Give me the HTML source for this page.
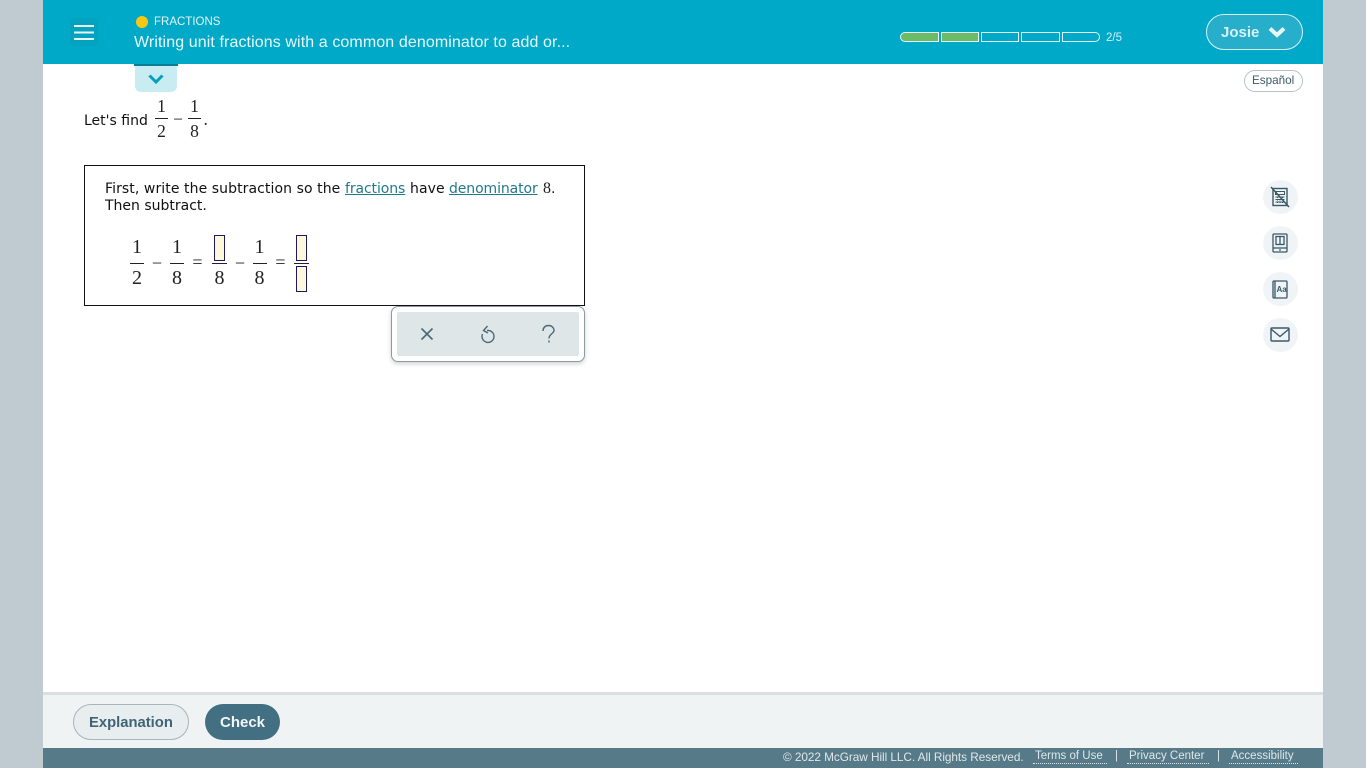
<!DOCTYPE html>
<html lang="en"><head><meta charset="utf-8"><title>Fractions</title>
<style>
html,body{margin:0;padding:0;width:1366px;height:768px;overflow:hidden;background:#bfcbd1}
#app{position:absolute;left:43px;top:0;width:1280px;height:768px;background:#fff}
.a{position:absolute;white-space:nowrap;line-height:1}
body{font-family:"Liberation Sans",sans-serif}
.dj{font-family:"DejaVu Sans",sans-serif;font-size:14px;color:#111;line-height:17px}
.m{font-family:"Liberation Serif",serif;color:#222;text-align:center;line-height:1}
.bar{position:absolute;background:#222;height:1px}
.box{position:absolute;box-sizing:border-box;border:1.5px solid #1d1a5e;background:#fdf8dc;width:11px;height:26px}
.circ{position:absolute;left:1263px;width:35px;height:34px;border-radius:50%;background:#f1f4f6}
svg{position:absolute;overflow:visible}
a{color:#1f7a8c;text-decoration:underline}
.seg{position:absolute;top:32px;height:10px;box-sizing:border-box;border:1px solid #e6f6f9}
</style></head><body>
<div id="app"></div>
<div class="a" style="left:43px;top:0;width:1280px;height:64px;background:#00a9c7"></div>

<!-- hamburger -->
<div class="a" style="left:70px;top:18px;width:28px;height:28px;border-radius:4px;background:#03a3c0"></div>
<svg style="left:74px;top:25px" width="20" height="15" viewBox="0 0 20 15"><path d="M0 1h20M0 7.500h20M0 14h20" stroke="#e8f6f9" stroke-width="2"/></svg>
<div class="a" style="left:136px;top:16px;width:12px;height:12px;border-radius:50%;background:#f7c713"></div>
<div class="a" style="left:154px;top:17px;font-size:11.500px;color:#e3f5f8">FRACTIONS</div>
<div class="a" style="left:134px;top:35px;font-size:16px;color:#e8f7fa;letter-spacing:.1px">Writing unit fractions with a common denominator to add or...</div>

<!-- drop tab -->
<div class="a" style="left:135px;top:64px;width:42px;height:28px;background:#c9ecf2;border-radius:0 0 6px 6px"></div>
<div class="a" style="left:134px;top:64px;width:44px;height:2px;background:#087f96"></div>
<svg style="left:148px;top:74px" width="16" height="10" viewBox="0 0 16 10"><path d="M1.500 1.500L8 8l6.500-6.500" fill="none" stroke="#05a0bb" stroke-width="3"/></svg>

<!-- progress -->
<div class="seg" style="left:900px;width:39px;background:#6cbb66;border-radius:5px 0 0 5px"></div>
<div class="seg" style="left:941px;width:38px;background:#6cbb66"></div>
<div class="seg" style="left:981px;width:38px"></div>
<div class="seg" style="left:1021px;width:39px"></div>
<div class="seg" style="left:1062px;width:38px;border-radius:0 5px 5px 0"></div>
<div class="a" style="left:1106px;top:33px;font-size:11.500px;color:#d5f0f5">2/5</div>

<!-- user -->
<div class="a" style="left:1206px;top:14px;width:97px;height:36px;box-sizing:border-box;border:1px solid #d6f1f6;border-radius:18px;background:#26aecb"></div>
<div class="a" style="left:1221px;top:25px;font-size:15px;font-weight:700;color:#d8f1f6">Josie</div>
<svg style="left:1268px;top:26px" width="18" height="12" viewBox="0 0 18 12"><path d="M2 2.500L9 9 16 2.500" fill="none" stroke="#eaf8fa" stroke-width="4"/></svg>

<!-- espanol -->
<div class="a" style="left:1244px;top:70px;width:59px;height:22px;box-sizing:border-box;border:1px solid #b7c2c7;border-radius:11px"></div>
<div class="a" style="left:1252px;top:74.500px;font-size:11.700px;color:#3c5a68">Español</div>

<!-- let's find -->
<div class="a dj" style="left:84px;top:113px;">Let's find</div>
<div class="a m" style="left:155px;top:98px;width:13px;font-size:17.500px">1</div>
<div class="bar" style="left:155px;top:118px;width:13px"></div>
<div class="a m" style="left:155px;top:123px;width:13px;font-size:17.500px">2</div>
<div class="a m" style="left:172px;top:111px;width:12px;font-size:17.500px">&minus;</div>
<div class="a m" style="left:188px;top:98px;width:13px;font-size:17.500px">1</div>
<div class="bar" style="left:188px;top:118px;width:13px"></div>
<div class="a m" style="left:188px;top:123px;width:13px;font-size:17.500px">8</div>
<div class="a m" style="left:203.500px;top:111px;font-size:17.500px">.</div>

<!-- question box -->
<div class="a" style="left:84px;top:165px;width:501px;height:141px;box-sizing:border-box;border:1px solid #111"></div>
<div class="a dj" style="left:105px;top:181px;letter-spacing:.08px">First, write the subtraction so the</div>
<div class="a dj" style="left:345px;top:181px;letter-spacing:-.1px"><a>fractions</a></div>
<div class="a dj" style="left:410px;top:181px;letter-spacing:.08px">have</div>
<div class="a dj" style="left:449px;top:181px;letter-spacing:-.1px"><a>denominator</a></div>
<div class="a m" style="left:543px;top:181px;font-size:16px">8</div>
<div class="a dj" style="left:551px;top:181px">.</div>
<div class="a dj" style="left:105px;top:198px">Then subtract.</div>

<!-- equation -->
<div class="a m" style="left:130px;top:237px;width:14px;font-size:20px">1</div>
<div class="bar" style="left:130px;top:263px;width:14px"></div>
<div class="a m" style="left:130px;top:268px;width:14px;font-size:20px">2</div>
<div class="a m" style="left:150px;top:254px;width:14px;font-size:18px">&minus;</div>
<div class="a m" style="left:170px;top:237px;width:14px;font-size:20px">1</div>
<div class="bar" style="left:170px;top:263px;width:14px"></div>
<div class="a m" style="left:170px;top:268px;width:14px;font-size:20px">8</div>
<div class="a m" style="left:190px;top:253px;width:15px;font-size:18px">=</div>
<div class="box" style="left:214px;top:235px"></div>
<div class="bar" style="left:212px;top:263px;width:15px"></div>
<div class="a m" style="left:212px;top:268px;width:15px;font-size:20px">8</div>
<div class="a m" style="left:233px;top:254px;width:14px;font-size:18px">&minus;</div>
<div class="a m" style="left:252.500px;top:237px;width:14px;font-size:20px">1</div>
<div class="bar" style="left:253px;top:263px;width:14px"></div>
<div class="a m" style="left:252.500px;top:268px;width:14px;font-size:20px">8</div>
<div class="a m" style="left:273px;top:253px;width:15px;font-size:18px">=</div>
<div class="box" style="left:296px;top:235px"></div>
<div class="bar" style="left:294px;top:263px;width:15px"></div>
<div class="box" style="left:296px;top:266px"></div>

<!-- tool palette -->
<div class="a" style="left:391px;top:306px;width:194px;height:56px;box-sizing:border-box;border:1px solid #8d9a9f;border-radius:7px;background:#fff;box-shadow:0 2px 5px rgba(0,0,0,.18)"></div>
<div class="a" style="left:397px;top:312px;width:182px;height:44px;background:#dfe6e8;border-radius:2px"></div>
<svg style="left:421px;top:328px" width="12" height="12" viewBox="0 0 12 12"><path d="M.5 .5l11 11M11.500 .5l-11 11" stroke="#476a78" stroke-width="1.600" fill="none"/></svg>
<svg style="left:481px;top:325px" width="14" height="18" viewBox="0 0 14 18"><path d="M6.500 1L2.500 5.500 7 8M6 5.500A6 6 0 1 1 1.500 9" stroke="#476a78" stroke-width="1.400" fill="none"/></svg>
<svg style="left:542px;top:325px" width="13" height="18" viewBox="0 0 13 18"><path d="M1 6C1 2.500 3.500 .5 6.500 .5 9.500 .5 12 2.500 12 5.500 12 8.500 7 9 7 13.500M7 15.500v2" stroke="#476a78" stroke-width="1.400" fill="none"/></svg>

<!-- side tools -->
<div class="circ" style="top:180px"></div>
<svg style="left:1271px;top:187px" width="18" height="20" viewBox="0 0 18 20" fill="none" stroke="#38596a"><rect x="2" y="1.500" width="14" height="17" stroke-width="1.400"/><path d="M4.500 4.500h9v3h-9z" stroke-width="1"/><path d="M4.500 10h9M4.500 12.500h9M4.500 15h9M6.500 9.500v6.500M9 9.500v6.500M11.500 9.500v6.500" stroke-width="1" stroke-dasharray="1.500 1"/><path d="M0 0l18 20" stroke-width="1.500"/></svg>
<div class="circ" style="top:226px"></div>
<svg style="left:1272px;top:233px" width="16" height="20" viewBox="0 0 16 20" fill="none" stroke="#38596a" stroke-width="1.300"><rect x="1" y="1" width="14" height="18" rx="1"/><path d="M1 15h14"/><rect x="4" y="3.500" width="8" height="8"/><path d="M8 3.500v8"/><path d="M7.200 17h1.600" stroke-width="1.500"/></svg>
<div class="circ" style="top:272px"></div>
<svg style="left:1272px;top:280px" width="16" height="19" viewBox="0 0 16 19" fill="none" stroke="#38596a" stroke-width="1.300"><rect x="1" y="1" width="14" height="17" rx="1"/><path d="M3 1v17"/><text x="4.500" y="12" font-family="Liberation Sans" font-size="8" font-weight="700" fill="#38596a" stroke="none">Aa</text></svg>
<div class="circ" style="top:318px"></div>
<svg style="left:1270px;top:327px" width="20" height="15" viewBox="0 0 20 15" fill="none" stroke="#38596a" stroke-width="1.400"><rect x="1" y="1" width="18" height="13" rx="1"/><path d="M1 2l9 7.500L19 2"/></svg>

<!-- bottom bar -->
<div class="a" style="left:43px;top:692px;width:1280px;height:56px;background:#eff3f4"></div>
<div class="a" style="left:43px;top:692px;width:1280px;height:3px;background:#d8e0e2"></div>
<div class="a" style="left:73px;top:704px;width:116px;height:36px;box-sizing:border-box;border:1px solid #a8b5ba;border-radius:18px;background:#e8edef"></div>
<div class="a" style="left:89px;top:716px;font-size:14.800px;font-weight:700;color:#3f6475">Explanation</div>
<div class="a" style="left:205px;top:704px;width:75px;height:36px;border-radius:18px;background:#436f82"></div>
<div class="a" style="left:220px;top:715px;font-size:15px;font-weight:700;color:#f2f6f7">Check</div>

<!-- footer -->
<div class="a" style="left:43px;top:748px;width:1280px;height:20px;background:#567a88"></div>
<div class="a" style="left:783px;top:751.500px;font-size:11.800px;color:#dfe8eb;letter-spacing:-.05px">© 2022 McGraw Hill LLC. All Rights Reserved.</div>
<div class="a" style="left:1035px;top:751px;font-size:11.500px;color:#dfe8eb">Terms of Use</div>
<div class="a" style="left:1033px;top:763px;width:74px;border-top:1px dotted #dfe8eb"></div>
<div class="a" style="left:1115px;top:751px;font-size:11.500px;color:#dfe8eb">|</div>
<div class="a" style="left:1129px;top:751px;font-size:11.500px;color:#dfe8eb">Privacy Center</div>
<div class="a" style="left:1127px;top:763px;width:82px;border-top:1px dotted #dfe8eb"></div>
<div class="a" style="left:1217px;top:751px;font-size:11.500px;color:#dfe8eb">|</div>
<div class="a" style="left:1231px;top:751px;font-size:11.500px;color:#dfe8eb">Accessibility</div>
<div class="a" style="left:1229px;top:763px;width:69px;border-top:1px dotted #dfe8eb"></div>
</body></html>
